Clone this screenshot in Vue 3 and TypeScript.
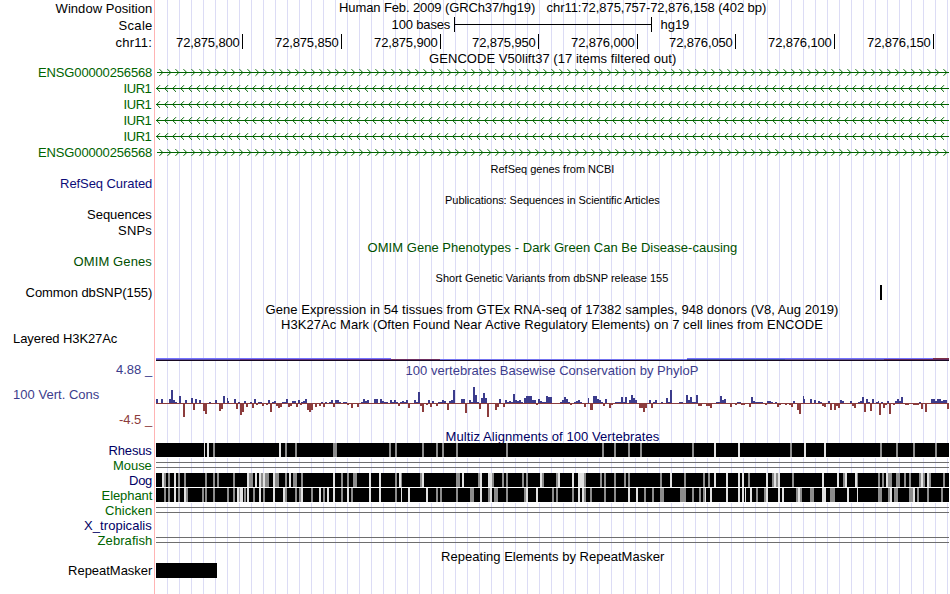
<script setup lang="ts">
// --- TYPES ---
// start and end are horizontal pixel positions of the text
interface Caption {
  text: string;
  start: number;
  end: number;
  y: number;
  color?: string;
  small?: boolean;
}

interface Row {
  height: number;
  kind?: string;
  labels?: Caption[];
  captions?: Caption[];
  light?: number[][];
  gray?: number[][];
}

// --- COLORS ---
const green = '#006400';
const navy = '#0c0c78';
const deepNavy = '#000064';
const consBlue = '#3c3c8c';
const consRed = '#8c3c3c';
const omimGreen = '#005000';

// --- HELPERS ---
const cap = (text: string, start: number, end: number, y: number, color = '#000', small = false): Caption => ({
  text,
  start,
  end,
  y,
  color,
  small,
});

const gene = (name: string, kind: string): Row => ({
  height: 16,
  kind,
  labels: [name === 'IUR1' ? cap(name, 124, 151.5, 12, green) : cap(name, 38.5, 152, 12, green)],
});

// --- RULER ---
const ticks = [242, 341, 440, 538, 637, 735, 834, 933];
const positions = ['72,875,800', '72,875,850', '72,875,900', '72,875,950', '72,876,000', '72,876,050', '72,876,100', '72,876,150'];

// Strand direction marks, one every 8px
const forwardMarks = Array.from({ length: 99 }, (_, i) => `M${159.5 + i * 8} 4.2l3.3 3.3l-3.3 3.3`).join('');
const reverseMarks = Array.from({ length: 99 }, (_, i) => `M${160 + i * 8} 4.2l-3.3 3.3l3.3 3.3`).join('');

// --- CONSERVATION SCORES: x, value, width ---
const scores: number[][] = [
  [156, 4], [161, 4], [169, 4], [171, 13], [173, 3], [175, 1], [179, 7], [183, -14], [185, 3], [191, 5], [193, -7],
  [195, 4], [199, 3], [203, -8], [205, -11], [209, 1], [215, 3], [219, -8], [221, -6], [223, 7], [227, 5, 1], [228, 2, 1],
  [234, 4], [236, -6], [238, 1], [240, -12], [242, -9], [244, 2], [246, -4], [250, 1], [252, -5], [254, 4], [256, -2],
  [258, 1, 4], [262, -3], [266, -2], [268, 3], [270, -9], [272, 1], [274, 2], [276, -3], [278, -5], [280, -4], [282, 1, 4],
  [286, 4], [288, -4], [290, -3], [292, 2, 4], [296, -4], [298, 3], [300, -2], [301, 1], [303, 2], [305, 4], [307, -7],
  [309, -9], [311, -7], [315, -4], [319, -3], [321, 1], [323, -4], [325, 1], [329, 1], [331, 3], [333, -4], [335, 3, 4],
  [339, 1], [343, 1, 4], [347, -2], [351, -5], [357, -4], [361, 1], [363, 4], [365, 2], [367, 3], [374, 4, 4], [380, 4],
  [382, 2], [384, 1, 4], [390, 3], [392, 1], [394, 3], [396, 1], [398, -3], [400, 1], [402, 2], [404, 1], [406, 3],
  [408, -5], [414, 3], [416, 1], [418, 11], [420, -3], [422, -9], [426, -2], [428, 3], [430, -4], [432, 2], [436, -3],
  [438, 1, 4], [442, 3], [444, 2], [447, -7], [449, 2], [451, 3], [453, 13], [461, 4, 4], [465, -10], [469, 3], [471, 1],
  [473, 16], [475, 8], [477, 1], [479, -6], [481, 5], [483, 10], [485, 5], [487, -14], [495, -7], [497, -4], [499, 4],
  [503, -4], [505, 3], [507, 1], [509, 2], [511, 1], [513, 9], [515, 3], [517, 2], [519, 3], [521, 1], [524, 5], [526, 7, 6],
  [532, 3, 4], [536, -2], [538, 4], [540, 2], [542, 1, 4], [546, 7, 2], [548, 6, 4], [560, 1], [562, 3], [564, 6], [566, 4],
  [568, 1], [570, -2], [574, 1], [576, 2], [578, 3], [580, 1], [584, -4], [588, 5, 1], [590, -7, 3], [593, 7, 4], [597, 4],
  [599, 3], [601, 1], [603, -3], [605, 4], [609, -5], [611, -2], [615, 1, 6], [621, 6], [623, 1], [625, 6], [629, 3],
  [631, 8], [633, 5], [635, 3], [639, -5], [641, -5], [643, -9], [645, -5], [649, 3], [651, -5], [653, 1], [655, 3],
  [661, 1], [666, 5], [668, 1], [670, 13], [679, 1, 4], [686, 8], [688, 3], [690, 6], [692, 1, 4], [696, 8], [698, -3, 4],
  [706, -3, 4], [710, -5], [716, 1, 4], [720, 7], [722, 3], [724, 4], [730, -4], [735, -2], [737, 1, 4], [741, -2, 4],
  [749, -4], [751, 6], [753, 2], [755, 1, 8], [765, -2], [767, 2, 4], [771, 1], [775, 1], [777, -4], [779, -2], [785, -2],
  [789, -2], [791, -4], [793, 2], [797, -7], [799, -11], [803, 7, 1], [804, 4, 1], [810, 4], [814, 3], [818, 2], [820, 1],
  [822, -3], [824, -4], [828, 2], [830, -7], [834, -7], [836, -3], [838, -5], [840, 3], [842, 2], [850, 2], [852, -3],
  [854, -5], [858, 1], [860, 2], [862, 6], [864, -9], [866, 4], [868, 1], [870, -8], [872, 4], [876, 1], [878, 2, 1],
  [879, -12], [881, 1], [883, -5], [885, -2], [887, 2], [889, -11], [893, -2], [895, 2], [897, 4], [899, 2], [901, 6],
  [905, -2, 4], [913, -2, 6], [919, 1], [921, -6], [925, -9], [931, 4, 4], [935, 2], [937, 4, 4], [941, 2], [943, 3, 4],
  [947, -6],
];

// --- H3K27AC LAYERS: x, y, width ---
const signal: [number, number, number, string][] = [
  [156, 26, 235, '#7373ff'],
  [687, 26, 246, '#7373ff'],
  [933, 26, 16, '#7d3046'],
  [156, 27, 84, '#5c4cb0'],
  [240, 27, 151, '#642d8c'],
  [391, 27, 49, '#6e2d5f'],
  [440, 27, 247, '#7373f0'],
  [687, 27, 98, '#3c4b96'],
  [785, 27, 99, '#6450a0'],
  [884, 27, 65, '#64285f'],
  [156, 28, 793, '#180a22'],
];

// --- ALIGNMENT GAPS: x, width ---
const rhesusLight = [[204, 1], [207], [279], [714], [738], [804], [824]];
const rhesusGray = [
  [213], [285], [295], [333, 4], [389], [395], [422], [436], [442], [456], [506], [602], [614], [628], [640], [692],
  [790], [880], [896], [913], [935],
];
const dogLight = [
  [162], [174], [247], [255], [259], [263], [273], [289], [333], [369], [379], [399], [422], [462], [480], [488, 4],
  [540], [558], [572], [578, 6], [670], [714], [726], [738], [742], [766], [774], [778], [822], [837], [845], [855],
  [886], [921], [927],
];
const dogGray = [
  [164], [168], [178], [184], [205], [213], [217], [233], [249, 4], [261], [265, 4], [275, 4], [285], [293, 4], [301],
  [341], [347], [353, 4], [395], [401, 1], [420], [456, 4], [478], [492], [502], [506], [522], [526], [542], [556],
  [584], [600], [604], [614], [624], [628], [660], [684], [703], [708], [748], [772], [776], [792], [843], [857, 1],
  [878], [882], [888, 4], [896, 4], [904], [909], [919], [923], [929], [943],
];
const elephantLight = [
  [174], [184], [237], [240, 3], [247], [259], [273], [283], [301], [319], [327], [333], [347], [369], [379], [401, 1],
  [408], [426], [480], [490], [526], [536], [578], [582], [628], [636], [705, 1], [710], [726], [738], [742], [745, 1],
  [750], [766], [778], [782], [798], [822, 4], [847], [857, 1], [890], [913],
];
const elephantGray = [
  [164], [168], [178], [186], [202], [205], [213], [227], [233], [239, 1], [244], [253], [263], [285], [295], [299],
  [311], [323], [341], [351], [395], [436], [440], [456], [470, 4], [488], [494, 4], [506], [524], [552], [556], [572],
  [584], [590], [604], [614], [644], [652], [660, 4], [680, 6], [692], [699], [703], [756], [764], [796], [800],
  [810, 4], [830, 5], [878, 4], [888], [894, 4], [909, 4], [917], [927], [941],
];

// --- TRACK ROWS, TOP TO BOTTOM ---
const rows: Row[] = [
  {
    height: 17,
    labels: [cap('Window Position', 56, 152, 13)],
    captions: [
      cap('Human Feb. 2009 (GRCh37/hg19)', 339.5, 535, 12),
      cap('chr11:72,875,757-72,876,158 (402 bp)', 547, 766, 12),
    ],
  },
  {
    height: 17,
    kind: 'scale',
    labels: [cap('Scale', 119, 152, 13)],
    captions: [cap('100 bases', 392, 450, 12), cap('hg19', 661, 689, 12)],
  },
  {
    height: 17,
    kind: 'ruler',
    labels: [cap('chr11:', 116, 151.5, 13)],
    captions: positions.map((p, i) => cap(p, ticks[i] - 65.5, ticks[i] - 2.5, 13)),
  },
  { height: 14, captions: [cap('GENCODE V50lift37 (17 items filtered out)', 429.5, 676, 12)] },
  gene('ENSG00000256568', 'forward'),
  gene('IUR1', 'reverse'),
  gene('IUR1', 'reverse'),
  gene('IUR1', 'reverse'),
  gene('IUR1', 'reverse'),
  gene('ENSG00000256568', 'forward'),
  { height: 15, captions: [cap('RefSeq genes from NCBI', 491, 614, 12, '#000', true)] },
  { height: 16, labels: [cap('RefSeq Curated', 60.5, 152, 12, navy)] },
  { height: 15, captions: [cap('Publications: Sequences in Scientific Articles', 445.5, 659.5, 12, '#000', true)] },
  { height: 16, labels: [cap('Sequences', 87.5, 151.5, 12)] },
  { height: 16, labels: [cap('SNPs', 118.5, 151.5, 12)] },
  { height: 15, captions: [cap('OMIM Gene Phenotypes - Dark Green Can Be Disease-causing', 368, 737, 13, omimGreen)] },
  { height: 16, labels: [cap('OMIM Genes', 74, 151.5, 12, omimGreen)] },
  { height: 15, captions: [cap('Short Genetic Variants from dbSNP release 155', 436, 668, 12, '#000', true)] },
  { height: 16, kind: 'snp', labels: [cap('Common dbSNP(155)', 26, 152, 12)] },
  {
    height: 16,
    captions: [cap('Gene Expression in 54 tissues from GTEx RNA-seq of 17382 samples, 948 donors (V8, Aug 2019)', 266, 838, 13)],
  },
  {
    height: 15,
    captions: [cap('H3K27Ac Mark (Often Found Near Active Regulatory Elements) on 7 cell lines from ENCODE', 281.5, 822.5, 12)],
  },
  { height: 30, kind: 'signal', labels: [cap('Layered H3K27Ac', 13.5, 117, 11)] },
  {
    height: 67,
    kind: 'conservation',
    labels: [
      cap('4.88', 116.5, 141, 12, consBlue),
      cap('_', 145.5, 152, 12, consBlue),
      cap('100 Vert. Cons', 13.5, 99, 37, consBlue),
      cap('-4.5', 119.5, 141, 62, consRed),
      cap('_', 145.5, 152, 62, consRed),
    ],
    captions: [cap('100 vertebrates Basewise Conservation by PhyloP', 406, 698, 13, consBlue)],
  },
  { height: 14, captions: [cap('Multiz Alignments of 100 Vertebrates', 446, 659, 12, deepNavy)] },
  { height: 15, kind: 'align', labels: [cap('Rhesus', 109, 151.5, 12, deepNavy)], light: rhesusLight, gray: rhesusGray },
  { height: 15, kind: 'gap', labels: [cap('Mouse', 113.5, 151.5, 12, green)] },
  { height: 15, kind: 'align', labels: [cap('Dog', 129.5, 152, 12, deepNavy)], light: dogLight, gray: dogGray },
  { height: 15, kind: 'align', labels: [cap('Elephant', 102, 152, 12, green)], light: elephantLight, gray: elephantGray },
  { height: 15, kind: 'gap', labels: [cap('Chicken', 105.5, 152, 12, green)] },
  { height: 15, labels: [cap('X_tropicalis', 84.5, 151.5, 12, deepNavy)] },
  { height: 15, kind: 'gap', labels: [cap('Zebrafish', 98, 152, 12, green)] },
  { height: 15, captions: [cap('Repeating Elements by RepeatMasker', 441.5, 664, 13)] },
  { height: 31, kind: 'repeat', labels: [cap('RepeatMasker', 68.5, 152, 12)] },
];
</script>

<template>
  <main class="browser">
    <section v-for="(row, r) in rows" :key="r" class="row">
      <svg class="label" width="155" :height="row.height">
        <text
          v-for="(c, i) in row.labels"
          :key="i"
          :x="c.start - 0.4"
          :y="c.y"
          :fill="c.color"
          :textLength="c.end - c.start + 0.7"
        >{{ c.text }}</text>
      </svg>
      <svg class="track" width="794" :height="row.height" :viewBox="`155 0 794 ${row.height}`">
        <g v-if="row.kind === 'scale'">
          <rect x="454" y="7" width="198" height="1" />
          <rect x="454" y="0" width="1" height="15" />
          <rect x="651" y="0" width="1" height="15" />
        </g>
        <g v-else-if="row.kind === 'ruler'">
          <rect v-for="t in ticks" :key="t" :x="t" y="0" width="1" height="15" />
        </g>
        <g v-else-if="row.kind === 'forward' || row.kind === 'reverse'">
          <path class="marks" :d="row.kind === 'forward' ? forwardMarks : reverseMarks" />
          <rect :x="row.kind === 'forward' ? 157 : 156" y="7" width="793" height="1" :fill="green" />
        </g>
        <rect v-else-if="row.kind === 'snp'" x="880" y="0" width="2" height="15" />
        <g v-else-if="row.kind === 'signal'">
          <rect v-for="(s, i) in signal" :key="i" :x="s[0]" :y="s[1]" :width="s[2]" height="1" :fill="s[3]" />
        </g>
        <g v-else-if="row.kind === 'conservation'">
          <rect x="156" y="41" width="793" height="1" :fill="consRed" />
          <rect
            v-for="(s, i) in scores"
            :key="i"
            :x="s[0]"
            :y="s[1] > 0 ? 41 - s[1] : 41"
            :width="s[2] ?? 2"
            :height="Math.abs(s[1])"
            :fill="s[1] > 0 ? consBlue : consRed"
          />
        </g>
        <g v-else-if="row.kind === 'align'">
          <rect x="156" y="0" width="793" height="14" />
          <rect x="156" y="14" width="793" height="1" fill="#fff" />
          <rect v-for="g in row.gray" :key="'g' + g[0]" :x="g[0]" y="0" :width="g[1] ?? 2" height="14" fill="#8c8c8c" />
          <rect v-for="l in row.light" :key="'l' + l[0]" :x="l[0]" y="0" :width="l[1] ?? 2" height="14" fill="#e1e1e1" />
        </g>
        <g v-else-if="row.kind === 'gap'" fill="#6e6e6e">
          <rect x="156" y="4" width="793" height="1" />
          <rect x="156" y="9" width="793" height="1" />
        </g>
        <rect v-else-if="row.kind === 'repeat'" x="156" y="0" width="61" height="15" />
        <text
          v-for="(c, i) in row.captions"
          :key="'c' + i"
          :class="{ small: c.small }"
          :x="c.start - 0.4"
          :y="c.y"
          :fill="c.color"
          :textLength="c.end - c.start + 0.7"
        >{{ c.text }}</text>
      </svg>
    </section>
  </main>
</template>

<style>
body {
  margin: 0;
  background: #fff;
}
</style>

<style scoped>
.browser {
  display: flex;
  flex-direction: column;
  width: 949px;
  height: 594px;
  overflow: hidden;
  font-family: 'Liberation Sans', Arial, Helvetica, sans-serif;
  font-size: 13px;
  /* label column, its pink edge, then a guide line every 12px */
  background:
    linear-gradient(#ffb4b4, #ffb4b4) 154px 0 / 1px 100% no-repeat,
    linear-gradient(#fff, #fff) 0 0 / 156px 100% no-repeat,
    repeating-linear-gradient(to right, transparent 0 11px, #dcdcf5 11px 12px);
}

.row {
  display: flex;
  flex: none;
}

/* descenders reach into the next row */
.label,
.track {
  display: block;
  flex: none;
  overflow: visible;
}

.small {
  font-size: 11px;
}

.marks {
  fill: none;
  stroke: #006400;
  stroke-width: 1;
}
</style>
